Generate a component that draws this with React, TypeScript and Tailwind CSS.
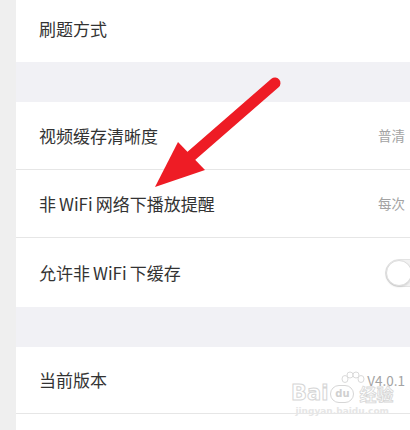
import React from 'react';

const font = { fontFamily: '"Noto Sans CJK SC", "Noto Sans", sans-serif' };

const Row: React.FC<{ label: React.ReactNode; value?: string; toggle?: boolean; divider?: boolean; h?: string }> = ({
  label,
  value,
  toggle,
  divider,
  h = 'h-[68px]',
}) => (
  <div className={`flex items-center justify-between bg-white pl-[23px] pr-[5px] ${h} ${divider ? 'border-b border-[#e6e6e6]' : ''}`}>
    <span className="text-[17px] text-[#333333]">{label}</span>
    {value && <span className="text-[13.5px] text-[#a3a3a3]">{value}</span>}
    {toggle && (
      <div className="mr-[-32px] flex h-[28px] w-[52px] items-center rounded-full border border-[#e3e3e3] bg-[#f2f2f2]">
        <div className="h-[26px] w-[26px] rounded-full border border-[#dcdcdc] bg-white shadow-[0_1px_2px_rgba(0,0,0,0.12)]" />
      </div>
    )}
  </div>
);

const Wifi = () => <span className="mx-[3px]">WiFi</span>;

const Watermark: React.FC = () => (
  <div className="pointer-events-none absolute left-[291px] top-[371px] flex flex-col items-center">
    <svg width="30" height="16" viewBox="0 0 30 16" className="-mb-[4px] ml-[22px]">
      <g fill="white" stroke="#dadada" strokeWidth="1">
        <ellipse cx="7" cy="8" rx="3" ry="3.5" />
        <ellipse cx="12" cy="4" rx="3" ry="3" />
        <ellipse cx="18" cy="4" rx="3" ry="3" />
        <ellipse cx="23" cy="8" rx="3" ry="3.5" />
      </g>
    </svg>
    <div className="flex items-center leading-none">
      <span
        className="text-[21px] font-bold text-white [-webkit-text-stroke:1px_#d6d6d6]"
        style={{ fontFamily: '"DejaVu Sans", sans-serif' }}
      >
        Bai
      </span>
      <span
        className="mx-[2px] flex h-[18px] w-[24px] items-center justify-center rounded-full border border-[#d6d6d6] bg-white text-[10px] font-bold text-[#d0d0d0]"
        style={{ fontFamily: '"DejaVu Sans", sans-serif' }}
      >
        du
      </span>
      <span className="ml-[3px] text-[17px] font-bold text-white [-webkit-text-stroke:0.8px_#d6d6d6]" style={font}>
        经验
      </span>
    </div>
    <span
      className="mt-[3px] text-[9px] font-bold leading-none text-[#e6e6e6]"
      style={{ fontFamily: '"DejaVu Sans", sans-serif' }}
    >
      jingyan.baidu.com
    </span>
  </div>
);

const Arrow: React.FC = () => (
  <svg className="pointer-events-none absolute left-0 top-0" width="410" height="430" viewBox="0 0 410 430">
    <line x1="275" y1="83" x2="190" y2="157" stroke="#ee1c25" strokeWidth="11" strokeLinecap="round" />
    <polygon points="155,187 178,142 205,170" fill="#ee1c25" />
  </svg>
);

export default function App() {
  return (
    <div className="relative h-[430px] w-[410px] overflow-hidden bg-[#efefef]" style={font}>
      <div className="ml-[16px] flex flex-col bg-white">
        <div className="flex h-[62px] items-center bg-white pb-[4px] pl-[23px]">
          <span className="text-[17px] text-[#333333]">刷题方式</span>
        </div>
        <div className="h-[40px] bg-[#f1f1f5]" />
        <Row label="视频缓存清晰度" value="普清" divider />
        <Row label={<>非<Wifi />网络下播放提醒</>} value="每次" divider />
        <Row label={<>允许非<Wifi />下缓存</>} toggle h="h-[69px]" />
        <div className="h-[40px] bg-[#f1f1f5]" />
        <Row label="当前版本" value="V4.0.1" divider h="h-[67px]" />
        <div className="h-[20px] bg-white" />
      </div>
      <Watermark />
      <Arrow />
    </div>
  );
}
